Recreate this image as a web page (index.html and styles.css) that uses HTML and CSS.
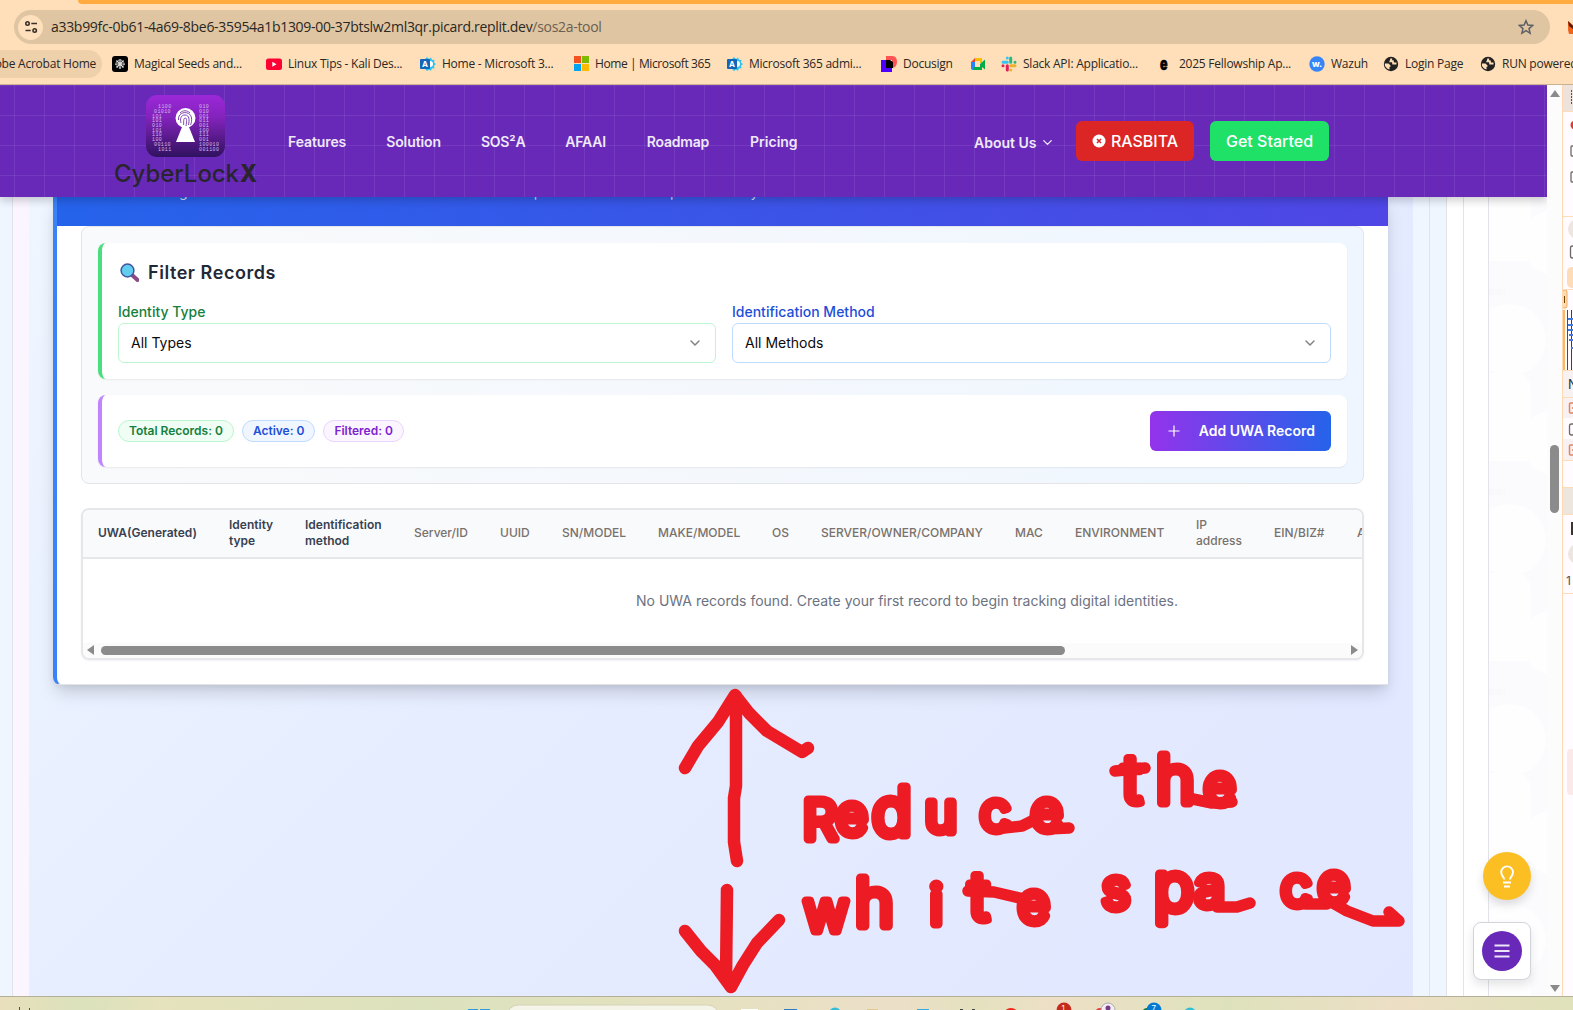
FILE: index.html
```html
<!DOCTYPE html>
<html lang="en">
<head>
<meta charset="utf-8">
<title>CyberLockX - SOS²A Tool</title>
<link rel="stylesheet" href="styles.css">
</head>
<body>
<svg width="0" height="0" class="defs">
  <symbol id="globe" viewBox="0 0 16 16"><circle cx="8" cy="8" r="7.200" fill="#222"/><path d="M1.800 7.500h3.700l2 2v1.200H6.500v2.800L4 12.500 2 10z" fill="#ffdfb9"/><path d="M8.500 2.500 7.500 5.200h2.300l.4 2.300h3.300" stroke="#ffdfb9" stroke-width="1.900" fill="none"/></symbol>
  <symbol id="admin" viewBox="0 0 16 16"><path d="M7 1l2 2 2-1.500 1 2.300 2.500.2-.5 2.500L16 8l-2 1.800.5 2.400-2.500.3-1 2.300-2-1-2 1.200L5 13V3z" fill="#2fc4f0"/><circle cx="10" cy="8" r="3" fill="#fff"/><rect x="0" y="3" width="10" height="10" rx="1" fill="#1466b8"/><text x="2" y="11" font-size="8" font-weight="700" fill="#fff">A</text></symbol>
  <symbol id="chev" viewBox="0 0 24 24"><path d="M6 9l6 6 6-6" fill="none" stroke="currentColor" stroke-width="2.200" stroke-linecap="round" stroke-linejoin="round"/></symbol>
</svg>

<div class="tabs"></div>
<div class="toolbar">
  <div class="urlbar">
    <span class="tune"><svg width="16" height="16" viewBox="0 0 16 16" fill="none" stroke="#3a3128" stroke-width="1.600"><circle cx="4.500" cy="4.500" r="1.700"/><path d="M8.300 4.500H14M2.500 11.500h5.200"/><circle cx="11.700" cy="11.500" r="1.700"/></svg></span>
    <span class="url">a33b99fc-0b61-4a69-8be6-35954a1b1309-00-37btslw2ml3qr.picard.replit.dev<i>/sos2a-tool</i></span>
    <svg class="star" width="16" height="16" viewBox="0 0 24 24" fill="none" stroke="#5c5f66" stroke-width="2.200"><path d="M12 2.500l2.800 6.600 7.200.6-5.500 4.700 1.700 7L12 17.600l-6.200 3.800 1.700-7L2 9.700l7.200-.6z"/></svg>
  </div>
  <svg class="fox" width="5" height="14" viewBox="0 0 5 14"><path d="M0 0l5 4v9H1L0 9z" fill="#f2631c"/><path d="M0 0l5 5v3L1 5z" fill="#5a1b0c"/></svg>
</div>
<div class="bookmarks">
  <span class="bm first"><b>obe Acrobat Home</b></span>
  <span class="bm"><svg width="16" height="16" viewBox="0 0 16 16"><rect width="16" height="16" rx="3" fill="#000"/><path d="M8 3v10M3 8h10M4.500 4.500l7 7M11.500 4.500l-7 7" stroke="#ddd" stroke-width="1.200"/><circle cx="8" cy="8" r="4" fill="none" stroke="#ddd" stroke-dasharray="1.500 1.200"/></svg><b>Magical Seeds and...</b></span>
  <span class="bm"><svg width="16" height="16" viewBox="0 0 16 16"><rect y="2.500" width="16" height="11.500" rx="2.500" fill="#ff0033"/><path d="M6.300 5.800v4.900l4.200-2.450z" fill="#fff"/></svg><b>Linux Tips - Kali Des...</b></span>
  <span class="bm"><svg width="16" height="16"><use href="#admin"/></svg><b>Home - Microsoft 3...</b></span>
  <span class="bm"><svg width="16" height="16" viewBox="0 0 16 16"><path fill="#f4511e" d="M1 0h7v7H1z"/><path fill="#7fba00" d="M9 0h7v7H9z"/><path fill="#00a4ef" d="M1 8h7v7H1z"/><path fill="#ffb900" d="M9 8h7v7H9z"/></svg><b class="tight">Home | Microsoft 365</b></span>
  <span class="bm"><svg width="16" height="16"><use href="#admin"/></svg><b>Microsoft 365 admi...</b></span>
  <span class="bm"><svg width="16" height="16" viewBox="0 0 16 16"><path fill="#4c00ff" d="M0 4h5v7h6v5H0z"/><path fill="#ff5252" d="M5 0h6c4 0 5 3 5 6s-2 6-5 6V4H5z"/><path d="M5 4h4l3 2v6H5z"/></svg><b>Docusign</b></span>
  <span class="bm"><svg width="16" height="16" viewBox="0 0 16 16"><path fill="#ea4335" d="M1 6l4-4v4z"/><path fill="#fbbc04" d="M5 2h7v5h-2V5H5z"/><path fill="#2684fc" d="M1 6h4v5H4v3H2.500L1 13z"/><path fill="#00ac47" d="M4 11h6V8l5-4.500v10L12 11v3H4z"/></svg></span>
  <span class="bm"><svg width="16" height="16" viewBox="0 0 16 16" stroke-width="3" stroke-linecap="round"><path stroke="#36c5f0" d="M6.300 2v0M2 6.300h4.300"/><path stroke="#2eb67d" d="M9.700 2v4.300M14 6.300v0"/><path stroke="#ecb22e" d="M9.700 9.700H14M9.700 14v0"/><path stroke="#e01e5a" d="M6.300 9.700V14M2 9.700v0"/></svg><b>Slack API: Applicatio...</b></span>
  <span class="bm"><svg width="16" height="16" viewBox="0 0 16 16"><text x="3" y="13.500" font-size="17" font-weight="900" textLength="7.500" lengthAdjust="spacingAndGlyphs" stroke="#000" stroke-width=".6">e</text></svg><b>2025 Fellowship Ap...</b></span>
  <span class="bm"><svg width="16" height="16" viewBox="0 0 16 16"><circle cx="8" cy="8" r="7.700" fill="#3585f9"/><text x="3" y="11" font-size="9" font-weight="800" fill="#fff">w.</text></svg><b>Wazuh</b></span>
  <span class="bm"><svg width="16" height="16"><use href="#globe"/></svg><b>Login Page</b></span>
  <span class="bm"><svg width="16" height="16"><use href="#globe"/></svg><b>RUN powered</b></span>
</div>

<div class="view">
  <div class="page">
    <header class="site">
      <div class="brand">
        <svg width="144" height="96" viewBox="0 0 144 96">
          <defs><linearGradient id="lg" x1="0" y1="0" x2="0" y2="1"><stop offset="0" stop-color="#9b28d8"/><stop offset=".35" stop-color="#8423bd"/><stop offset="1" stop-color="#30125f"/></linearGradient></defs>
          <rect x="32" y="2" width="79" height="62" rx="11" fill="url(#lg)"/>
          <g class="bits" fill="#cfb8ea">
            <text x="44" y="15">1100</text><text x="40" y="20">01010</text><text x="38" y="24.500">101</text><text x="38" y="29">101</text><text x="38" y="34">010</text><text x="38" y="38.500">101</text><text x="38" y="43">110</text><text x="38" y="47.500">100</text><text x="40" y="53">00110</text><text x="44" y="57.500">1011</text>
            <text x="85" y="15">010</text><text x="85" y="20">010</text><text x="85" y="24.500">001</text><text x="85" y="29">011</text><text x="85" y="34">001</text><text x="85" y="38.500">100</text><text x="85" y="43">111</text><text x="85" y="47.500">001</text><text x="85" y="53">100010</text><text x="85" y="57.500">001100</text>
          </g>
          <path d="M62 49l6-15h7l6 15z" fill="#fff"/><circle cx="71.500" cy="25" r="10" fill="#fff"/>
          <g fill="none" stroke="#7130a8" stroke-width=".9"><path d="M64.500 27c-1-9 12-10 13-2 .3 2 0 5-1 7M67 30c-1-4-.5-8 4-8s4.500 5 3.500 10M69.500 32c.5-2-.5-7 1.700-7s1.300 4 .8 8M66 20c3-3 7-3 10 0"/></g>
          <text x="0" y="89" class="wordmark" textLength="125" lengthAdjust="spacingAndGlyphs">CyberLock</text>
          <text x="126" y="89" class="wordmark x" textLength="17" lengthAdjust="spacingAndGlyphs">X</text>
        </svg>
      </div>
      <nav><a>Features</a><a>Solution</a><a>SOS²A</a><a>AFAAI</a><a>Roadmap</a><a>Pricing</a></nav>
      <a class="about">About Us <svg width="15" height="15"><use href="#chev"/></svg></a>
      <a class="btn red"><svg width="14" height="14" viewBox="0 0 14 14"><circle cx="7" cy="7" r="6.500" fill="#fff"/><path d="M5 5l4 4M9 5L5 9" stroke="#dc2626" stroke-width="1.600"/></svg>RASBITA</a>
      <a class="btn green">Get Started</a>
    </header>

    <div class="stage">
      <div class="strip s1"></div><div class="strip s2"></div>
      <main>
        <section class="card">
          <div class="banner"><p>UWA tracking of all server hardware and websites across our computer networks set up for security our clients</p></div>
          <div class="cardbody">
            <div class="panel">
              <div class="box filter">
                <h3><svg width="19" height="19" viewBox="0 0 19 19"><path d="M12 12l5.500 5" stroke="#8a4a86" stroke-width="4" stroke-linecap="round"/><circle cx="7.500" cy="7.500" r="6.400" fill="#62cdee" stroke="#4057a0" stroke-width="1.500"/></svg>Filter Records</h3>
                <div class="fields">
                  <div class="field g"><label>Identity Type</label><div class="select">All Types<svg width="16" height="16"><use href="#chev"/></svg></div></div>
                  <div class="field b"><label>Identification Method</label><div class="select">All Methods<svg width="16" height="16"><use href="#chev"/></svg></div></div>
                </div>
              </div>
              <div class="box stats">
                <div class="badges"><span class="bg-g">Total Records: 0</span><span class="bg-b">Active: 0</span><span class="bg-p">Filtered: 0</span></div>
                <a class="add"><svg width="16" height="16" viewBox="0 0 16 16"><path d="M8 2.500v11M2.500 8h11" stroke="#fff" stroke-width="1.200"/></svg>Add UWA Record</a>
              </div>
            </div>
            <div class="tablewrap">
              <div class="thead"><span class="k">UWA(Generated)</span><span class="k">Identity type</span><span class="k">Identification method</span><span>Server/ID</span><span>UUID</span><span>SN/MODEL</span><span>MAKE/MODEL</span><span>OS</span><span>SERVER/OWNER/COMPANY</span><span>MAC</span><span>ENVIRONMENT</span><span>IP address</span><span>EIN/BIZ#</span><span>A</span></div>
              <div class="empty">No UWA records found. Create your first record to begin tracking digital identities.</div>
              <div class="hscroll"><i class="l"></i><i class="thumb"></i><i class="r"></i></div>
            </div>
          </div>
        </section>
      </main>
      <div class="strip s3"></div><div class="strip s4"></div><div class="strip s5"></div><div class="strip s6"></div>
      <div class="deco">
        <svg width="58" height="799" viewBox="0 0 58 799">
          <defs><pattern id="lock" width="58" height="200" patternUnits="userSpaceOnUse" y="64">
            <rect width="58" height="200" fill="#fefeff"/>
            <path d="M0 3Q24-6 58 14V149l-16 8V0H0z" fill="#fbfbfe"/>
            <path d="M0 3Q24-4 42 5V150H0z" fill="#fbfbfe"/>
            <circle cx="21" cy="79" r="36" fill="#fefeff"/><path d="M0 112h30q12 3 12 20v68H0z" fill="#fefeff"/>
            <text x="0" y="34" font-size="8" fill="#f6f6fa">0101</text>
          </pattern></defs>
          <rect width="58" height="799" fill="url(#lock)"/>
        </svg>
      </div>
    </div>
    <div class="fab bulb"><svg width="24" height="24" viewBox="0 0 24 24" fill="none" stroke="#fff" stroke-width="1.900"><path d="M9.200 15.500c0-2.500-3-3.600-3-7.200a5.900 5.900 0 0 1 11.800 0c0 3.600-3 4.700-3 7.200M8 18.500h8M9 22.500h6"/></svg></div>
    <div class="menu"><div><svg width="20" height="20" viewBox="0 0 20 20"><path d="M2.500 4.500h15M2.500 10h15M2.500 15.500h15" stroke="#ece4f7" stroke-width="1.800"/></svg></div></div>
  </div>
  <div class="vscroll"><i class="u"></i><i class="thumb"></i><i class="d"></i></div>
  <div class="devtools">
    <svg width="11" height="911" viewBox="0 85 11 911">
      <rect y="85" width="11" height="911" fill="#fffbff"/><rect y="85" width="11" height="26" fill="#ede3dc"/>
      <path d="M9.500 90v15" stroke="#555" stroke-dasharray="2 1"/><circle cx="13" cy="125" r="4.500" fill="#e23b2f"/>
      <g fill="none" stroke="#6e6a66" stroke-width="1.300"><rect x="9" y="146" width="9" height="10" rx="1"/><rect x="9" y="172" width="9" height="10" rx="1"/><rect x="8.500" y="246" width="9" height="12" rx="2"/><rect x="7.500" y="424" width="9" height="11" rx="2"/></g>
      <rect x="6" y="219" width="20" height="20" rx="10" fill="#ede6df"/><rect x="5" y="267" width="12" height="21" rx="5" fill="#ffdcb8"/>
      <rect x="0" y="310" width="3" height="60" fill="#ffb566"/><rect x="0" y="290" width="5" height="18" rx="2" fill="#ffdcb0" stroke="#f0ad62"/><path d="M2.500 296v7" stroke="#6b4300"/>
      <path d="M5.500 310v60" stroke="#234f9e"/><path d="M9.500 310v60" stroke="#8b1f27"/><path d="M6 319h5M6 325h5M6 330h5M7 335h4M7 340h4M9 348h2" stroke="#3f7de0" stroke-width="2"/>
      <rect x="1" y="371" width="10" height="26" fill="#f7f1f2"/><rect y="398" width="11" height="20" fill="#f7f1f2"/><rect y="439" width="11" height="21" fill="#f7f1f2"/>
      <g fill="none" stroke="#e88259" stroke-width="1.500"><rect x="7.500" y="403" width="9" height="10" rx="1"/><rect x="7.500" y="445" width="9" height="10" rx="1"/><path d="M10 408h2M10 450h2"/></g>
      <rect y="488" width="11" height="26" fill="#ede6df"/><path d="M10 522v13" stroke="#3a352f" stroke-width="2"/><rect x="6" y="544" width="20" height="20" rx="10" fill="#ede6df"/>
      <text x="6" y="389" font-size="13" fill="#333">N</text><text x="4" y="585" font-size="12" fill="#555">1</text>
      <path d="M0 111.500h11M0 216.500h11M0 289.500h11M0 370.500h11M0 397.500h11M0 460.500h11M0 487.500h11M0 514.500h11M0 593.500h11" stroke="#ffdcb8"/>
      <rect x="5" y="749" width="20" height="46" rx="4" fill="#fbe9e9"/><path d="M.5 85v911" stroke="#ffd9b3"/>
    </svg>
  </div>
</div>

<div class="taskbar">
  <svg width="1573" height="13" viewBox="0 997 1573 13">
    <path d="M19.500 1007v3M29.500 1008v2" stroke="#55533f"/>
    <path d="M468 1009h10v1h-10zM480 1009h10v1h-10z" fill="#2f9bdc"/>
    <rect x="506.500" y="1005" width="213" height="30" rx="12" fill="#f4f5e8" stroke="#d5d3b4"/>
    <path d="M741 1009h17v1h-17z" fill="#fff"/><path d="M784 1009h13v1h-13z" fill="#2d7cc0"/><circle cx="835" cy="1014" r="6.500" fill="#30bfd6"/><path d="M867 1009h11v1h-11z" fill="#e2ca8b"/><path d="M917 1009h12v1h-12z" fill="#36a8e0"/><path d="M960 1009h3v1h-3zM972 1009h3v1h-3z" fill="#444"/>
    <circle cx="1011" cy="1016" r="8" fill="#f1261c"/><circle cx="1064" cy="1010" r="7.500" fill="#c42b1c"/><circle cx="1100" cy="1013" r="5" fill="#e43d3d"/><circle cx="1108" cy="1010" r="7" fill="#f3eef5" stroke="#aaa"/><circle cx="1108" cy="1008" r="2.500" fill="#763a87"/><circle cx="1147" cy="1013" r="5" fill="#15803d"/><circle cx="1154" cy="1010" r="7.500" fill="#0078d4"/><circle cx="1190" cy="1014" r="6.500" fill="#30bfd6"/>
    <text x="1061.500" y="1011" font-size="8" fill="#fff">1</text><text x="1151.500" y="1011" font-size="8" fill="#fff">7</text>
  </svg>
</div>

<svg class="ink" width="1573" height="1010" viewBox="0 0 1573 1010">
  <g class="pen">
    <path d="M736 696v90l-2 12v44l3 19M685 768l13-22 20-24 17-27 14 18 18 18 20 12 15 9 6-4"/>
    <path d="M727 890l-1 90M685 931l16 20 14 14 16 22 12-22 14-22 22-23"/>
    <path class="tail" d="M1333 903l14 8 26 10h26l-10-9M1217 907h20l13-4M1047 829l22-1M1004 828l18-2 16-8M968 891l26 1 30 7M1115 771l30-3M1188 798l24 5 20-1M1305 904h22"/>
  </g>
  <g class="hand">
    <text x="803 836 872 925 980 1031" y="839 834 835 832 831 830"><tspan>Re</tspan><tspan class="tall">d</tspan>uce</text>
    <text x="1122 1156 1204" y="803 803 804"><tspan class="tall">th</tspan>e</text>
    <text x="804 855 930 969 1018" y="931 926 924 920 922">w<tspan class="tall">h</tspan>i<tspan class="tall">t</tspan>e</text>
    <text x="1102 1154 1195 1281 1318" y="908 910 906 906 903">s<tspan class="tall">p</tspan>ace</text>
  </g>
</svg>
</body>
</html>
```
FILE: styles.css
```css
* { box-sizing: border-box; }
body { margin: 0; width: 1573px; height: 1010px; overflow: hidden; display: flex; flex-direction: column; position: relative; background: #ffdfb9; font-family: Inter, "Liberation Sans", sans-serif; font-size: 14px; }
svg { flex: none; display: block; }
.defs { position: absolute; }

.tabs { height: 4px; margin-left: 78px; background: #ffab40; border-bottom-left-radius: 8px; flex: none; }
.toolbar { height: 46px; flex: none; padding: 6px 0 0 14px; display: flex; align-items: flex-start; }
.urlbar { width: 1536px; flex: none; height: 34px; border-radius: 17px; background: #dfc5a1; display: flex; align-items: center; padding: 0 16px 0 4px; }
.tune { width: 25px; height: 25px; border-radius: 50%; background: #ffe0bc; display: grid; place-items: center; }
.url { flex: 1; margin-left: 8px; padding-bottom: 1px; font: 14px "Open Sans", sans-serif; letter-spacing: -.305px; color: #2b2723; white-space: nowrap; }
.url i { font-style: normal; color: #6a5f52; }
.fox { margin: 11px 0 0 18px; }
.bookmarks { height: 35px; flex: none; border-bottom: 1px solid #cbb091; display: grid; grid-template-columns: 112px 154px 154px 153px 154px 154px 89px 31px 156px 152px 74px 97px 93px; }
.bm { height: 28px; display: flex; align-items: center; gap: 6px; white-space: nowrap; }
.bm b { font: 12px "Open Sans", sans-serif; letter-spacing: -.24px; color: #2b2723; padding-bottom: 1px; }
.bm .tight { letter-spacing: -.4px; }
.first { width: 102px; background: #eed0ab; border-radius: 0 14px 14px 0; justify-content: flex-end; padding-right: 6px; }

.view { flex: none; height: 911px; display: flex; }
.page { width: 1547px; position: relative; overflow: hidden; background: #fff; }
.site { height: 112px; position: relative; z-index: 2; display: flex; align-items: center; padding-left: 114px; background-color: #6829b9; background-image: linear-gradient(90deg, rgba(255,255,255,.075) 1px, transparent 1px), linear-gradient(rgba(255,255,255,.075) 1px, transparent 1px); background-size: 30px 30px; background-position: 14px 0; box-shadow: 0 4px 8px rgba(0,0,0,.18); }
.brand { width: 144px; }
.brand svg { margin-top: -1px; }
.bits text { font: 400 5px "Liberation Mono", monospace; letter-spacing: .4px; }
.wordmark { font: 500 24px Inter, sans-serif; fill: #29242e; }
.wordmark.x { font-weight: 800; }
nav { display: flex; gap: 40px; margin-left: 30px; width: 686px; padding-top: 1px; }
nav a, .about { font-weight: 600; font-size: 14px; color: #efe8f8; }
nav a { letter-spacing: -.1px; }
nav a:nth-child(5) { margin-left: 1px; }
nav a:nth-child(6) { margin-left: 1px; letter-spacing: 0; }
.about { display: flex; align-items: center; gap: 4px; width: 102px; padding-top: 3px; white-space: nowrap; }
.btn { height: 40px; border-radius: 6px; color: #fff; font-size: 16px; font-weight: 500; display: flex; align-items: center; justify-content: center; gap: 5px; }
.red { width: 118px; background: #dc2626; }
.green { width: 119px; margin-left: 16px; background: #20e168; }
nav a:nth-child(3), nav a:nth-child(4), nav a:nth-child(5) { letter-spacing: -.22px; }

.stage { height: 799px; display: flex; }
.strip { border-right: 1px solid #e2e3e8; background: #fff; }
.s1 { width: 13px; background: #eff6ff; }
.s2 { width: 16px; background: #faf5ff; border: 0; }
.s3 { width: 17px; background: #eff6ff; }
.s4 { width: 17px; background: #eff6ff; }
.s5 { width: 17px; }
.s6 { width: 25px; }
.deco { width: 58px; }
main { width: 1384px; padding-left: 24px; background: linear-gradient(135deg, #eff6ff, #e6edff 42%, #e0e7ff); }
.card { width: 1335px; height: 488px; border-left: 4px solid #3b82f6; border-bottom: 1px solid #e2e3e6; border-bottom-left-radius: 8px; background: #fff; box-shadow: 0 10px 18px -3px rgba(0,0,0,.16), 0 3px 6px rgba(0,0,0,.05); }
.banner { height: 29px; background: linear-gradient(90deg, #2563eb, #4f46e5); color: #cfdcfb; }
.banner p { margin: 0; padding-left: 40px; font-size: 14px; width: 760px; line-height: 20px; height: 20px; transform: translateY(-15px); overflow: hidden; white-space: nowrap; }
.cardbody { padding: 0 24px; }
.panel { height: 258px; padding: 16px; border: 1px solid #e3e5e9; border-radius: 8px; background: linear-gradient(90deg, #f9fafb, #eff6ff); }
.box { background: #fff; border-radius: 8px; border-left: 4px solid #4ade80; padding: 16px; box-shadow: 0 1px 2px rgba(0,0,0,.07); }
.filter { height: 136px; }
.stats { height: 72px; margin-top: 16px; border-color: #c084fc; display: flex; justify-content: space-between; align-items: center; }
h3 { margin: 0 0 16px; height: 28px; font-size: 18px; font-weight: 600; letter-spacing: .55px; color: #1f2937; display: flex; align-items: center; gap: 9px; padding: 0 0 2px 2px; }
.fields { display: grid; grid-template-columns: 598px 599px; gap: 16px; }
.field label { display: block; height: 20px; line-height: 17px; font-weight: 500; }
.g label { color: #15803d; } .b label { color: #1d4ed8; }
.select { height: 40px; border: 1px solid #bbf7d0; border-radius: 6px; padding: 0 12px 1px; display: flex; justify-content: space-between; align-items: center; color: #0c0a09; }
.select svg { color: #858381; }
.b .select { border-color: #bfdbfe; }
.badges { display: flex; gap: 8px; }
.badges span { height: 22px; line-height: 20px; border: 1px solid; border-radius: 11px; padding: 0 10px; font-size: 12px; font-weight: 600; letter-spacing: -.01px; }
.bg-g { color: #15803d; background: #f0fdf4; border-color: #bbf7d0 !important; }
.bg-b { color: #1d4ed8; background: #eff6ff; border-color: #bfdbfe !important; }
.bg-p { color: #7e22ce; background: #faf5ff; border-color: #e9d5ff !important; }
.add { width: 181px; height: 40px; border-radius: 6px; padding: 0 16px 1px; display: flex; align-items: center; justify-content: space-between; color: #fff; font-weight: 600; background: linear-gradient(90deg, #9333ea, #2563eb); }
.tablewrap { margin-top: 24px; height: 152px; border: 2px solid #e5e7eb; border-radius: 8px; overflow: hidden; box-shadow: 0 1px 2px rgba(0,0,0,.05); }
.thead { height: 49px; padding-bottom: 2px; border-bottom: 2px solid #e5e7eb; background: #f9fafb; display: grid; grid-template-columns: 131px 76px 109px 86px 62px 96px 114px 49px 194px 60px 121px 78px 83px 40px; align-items: center; font-size: 12px; line-height: 16px; font-weight: 500; color: #78716c; }
.thead span { padding: 0 16px 0 15px; }
.thead .k { color: #374151; font-weight: 600; }
.empty { height: 84px; line-height: 83px; padding-left: 553px; color: #6b7280; white-space: nowrap; }
.hscroll { height: 15px; background: #fbfbfb; display: flex; align-items: center; padding: 0 4px 1px; }
.hscroll i { flex: none; }
.hscroll .l { border: 5px solid transparent; border-right: 7px solid #8b8b8b; border-left: 0; }
.hscroll .thumb { width: 964px; height: 9px; border-radius: 5px; background: #8b8b8b; margin-left: 7px; }
.hscroll .r { border: 5px solid transparent; border-left: 7px solid #8b8b8b; border-right: 0; margin-left: auto; }

.fab { position: absolute; left: 1483px; top: 767px; width: 48px; height: 48px; border-radius: 50%; background: #fbbf24; display: grid; place-items: center; box-shadow: 0 5px 10px rgba(0,0,0,.13); }
.menu { position: absolute; left: 1473px; top: 837px; width: 58px; height: 58px; border: 1px solid #d1d5db; border-radius: 8px; background: #fff; display: grid; place-items: center; box-shadow: 0 5px 10px rgba(0,0,0,.1); }
.menu div { width: 40px; height: 40px; border-radius: 50%; background: #6829b9; display: grid; place-items: center; }
.vscroll { width: 15px; background: #fcfcfc; display: flex; flex-direction: column; align-items: center; padding: 5px 0 4px; }
.vscroll .u { border: 5px solid transparent; border-bottom: 7px solid #8b8b8b; border-top: 0; }
.vscroll .thumb { width: 9px; height: 68px; border-radius: 5px; background: #8b8b8b; margin-top: 348px; }
.vscroll .d { border: 5px solid transparent; border-top: 7px solid #8b8b8b; border-bottom: 0; margin-top: auto; }
.devtools { width: 11px; }
.taskbar { height: 14px; flex: none; border-top: 1px solid #b3af98; background: linear-gradient(90deg, #e9dfbc, #dbe2bc 5%, #e5e2bd 10%, #dce2bd 27%, #e5e1c0 45%, #ecdfc8 57%, #e4e1be 62%, #eddfc6 67%, #dee2bc 78%, #ecdec5 89%, #dfe2ba); }
.ink { position: absolute; left: 0; top: 0; z-index: 5; pointer-events: none; }
.pen { fill: none; stroke: #ed1c24; stroke-width: 12.5; stroke-linecap: round; stroke-linejoin: round; }
.pen .tail { stroke-width: 11.5; }
.hand text { font: 300 54px Inter, sans-serif; fill: #ed1c24; stroke: #ed1c24; stroke-width: 9; stroke-linejoin: round; }
.hand .tall { font-size: 66px; }
```
